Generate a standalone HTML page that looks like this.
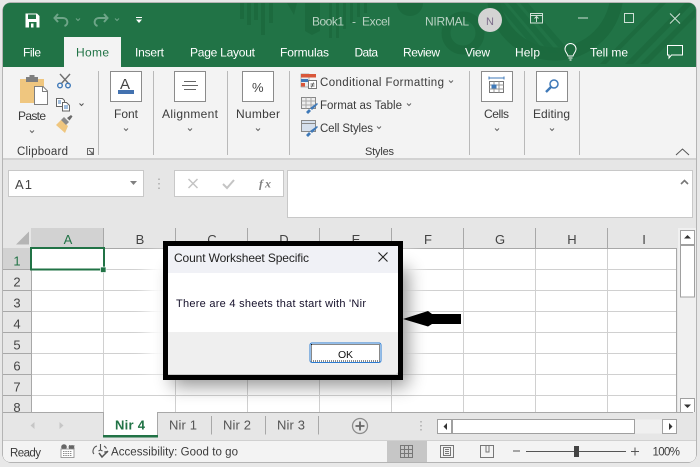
<!DOCTYPE html>
<html><head><meta charset="utf-8"><title>Excel</title>
<style>
html,body{margin:0;padding:0;background:#e8e8e8;width:700px;height:467px;overflow:hidden}
svg{display:block}
text{font-family:"Liberation Sans",sans-serif;font-size:12px;fill:#3b3b3b}
.tb text{fill:#fff}
.hd text{font-size:13px;fill:#444;text-anchor:middle}
.tt text{fill:#b9d2c3}
.nf{fill:none}
</style></head><body>
<svg width="700" height="467" viewBox="0 0 700 467" xmlns="http://www.w3.org/2000/svg" lengthAdjust="spacingAndGlyphs">
<defs>
<clipPath id="w"><rect x="3" y="3" width="693" height="459" rx="7"/></clipPath>
<clipPath id="tc"><rect x="3" y="3" width="693" height="64"/></clipPath>
<clipPath id="gc"><rect x="0" y="228" width="700" height="184.500"/></clipPath>
<clipPath id="sc"><rect x="104" y="248" width="573" height="164"/></clipPath>
<filter id="bl" x="-30%" y="-40%" width="160%" height="180%"><feGaussianBlur stdDeviation="9"/></filter>
<filter id="bw" x="-30%" y="-40%" width="160%" height="180%"><feGaussianBlur stdDeviation="8"/></filter>
</defs>
<rect x="2.500" y="2.500" width="694" height="460" rx="8" fill="#808080"/>
<g clip-path="url(#w)">
<rect x="0" y="0" width="700" height="467" fill="#e6e6e6"/>
<!-- title + tab bar -->
<rect x="0" y="0" width="700" height="67" fill="#217346"/>
<g clip-path="url(#tc)" fill="#1c6a3e" stroke="none">
<rect x="240" y="3" width="4" height="16"/><rect x="247" y="3" width="4" height="22"/><rect x="254" y="3" width="4" height="17"/><rect x="261" y="3" width="4" height="32"/><rect x="269" y="3" width="4" height="20"/>
<path d="M287 3h10l-3 12zM305 3h15v28l-8 4-7-4zM329 3h3v35h-3zM336 3h3v35h-3zM343 3h3v26h-3zM350 3h3v20h-3zM357 3h3v14h-3zM364 3h3v10h-3z"/>
<circle cx="410" cy="3" r="13"/>
<circle cx="463" cy="33" r="17" fill="none" stroke="#1c6a3e" stroke-width="9"/>
<circle cx="555" cy="-8" r="62" fill="none" stroke="#1c6a3e" stroke-width="13"/>
<path d="M496 3l8 0 42 50-8 0zM508 3l8 0 42 50-8 0zM520 3l8 0 38 44-8 0z" opacity=".8"/>
<path d="M625 64l60-61h8l-60 61zM640 64l55-55v8l-47 47zM600 64l60-61h6l-60 61z" opacity=".85"/>
</g>
<!-- QAT -->
<path d="M25.500 13.500h11.500l2.500 2.500v11.500h-14z" fill="#fff"/>
<rect x="28" y="14.500" width="8" height="4.500" fill="#217346"/>
<rect x="29" y="22" width="7.500" height="5.500" fill="#217346"/>
<rect x="31" y="23.500" width="2.500" height="4" fill="#fff"/>
<g fill="none" stroke="#6ea588" stroke-width="2">
<path d="M58 14l-3.500 4 3.500 4M55 18h8c5 0 6 6.500 1.500 8"/>
<path d="M104 14l3.500 4-3.500 4M107 18h-8c-5 0-6 6.500-1.500 8"/>
</g>
<g fill="none" stroke="#6ea588"><path d="M76 18.500l2 2 2-2M115 18.500l2 2 2-2"/></g>
<path d="M136 17.500h6" stroke="#fff"/><path d="M136 19.500h6l-3 3.500z" fill="#fff"/>
<g class="tt">
<text x="312" y="25.500" textLength="32">Book1</text><text x="352" y="25.500">-</text><text x="362" y="25.500" textLength="28">Excel</text>
<text x="425" y="25.500" textLength="44">NIRMAL</text>
</g>
<circle cx="490" cy="20" r="12" fill="#d3d3d3"/>
<text x="486" y="25" textLength="8.500" style="font-size:11px;fill:#7d6d8a">N</text>
<g fill="none" stroke="#cfe0d6">
<rect x="530.500" y="13.500" width="12" height="9.500"/><path d="M530.500 15.500h12M536.500 22v-5M534.500 18.500l2-2 2 2"/>
<path d="M578 18h10"/><rect x="624.500" y="13.500" width="9" height="9"/><path d="M670 13.500l10 10M680 13.500l-10 10"/>
</g>
<!-- tabs -->
<rect x="64" y="37" width="57" height="30" fill="#f3f3f3"/>
<g class="tb">
<text x="23" y="56.500" textLength="18">File</text>
<text x="76" y="56.500" textLength="33" style="fill:#217346">Home</text>
<text x="135" y="56.500" textLength="29">Insert</text>
<text x="190" y="56.500" textLength="65">Page Layout</text>
<text x="280" y="56.500" textLength="49">Formulas</text>
<text x="354.500" y="56.500" textLength="23.500">Data</text>
<text x="403" y="56.500" textLength="37">Review</text>
<text x="465" y="56.500" textLength="25">View</text>
<text x="515" y="56.500" textLength="25">Help</text>
<text x="590" y="56.500" textLength="38">Tell me</text>
</g>
<g fill="none" stroke="#fff">
<path d="M568 56c-.5-2.500-3-4-3-7a5.500 5.500 0 0 1 11 0c0 3-2.500 4.500-3 7z"/><path d="M568.500 58h4M569.500 60h2"/>
<path d="M667.500 45.500h15v9.500h-11l-2.500 3v-3h-1.500z"/>
</g>
<!-- ribbon -->
<rect x="0" y="67" width="700" height="91" fill="#f3f3f3"/>
<rect x="0" y="158" width="700" height="2" fill="#d2d2d2"/>
<g stroke="#b9b9b9" fill="none">
<path d="M98.500 71v84M153.500 71v84M227.500 71v84M289.500 71v84M469.500 71v84M524.500 71v84M579.500 71v84"/>
</g>
<!-- Paste icon -->
<path d="M20 79h24v14H34v10H20z" fill="#efc67f"/>
<rect x="26" y="77" width="12" height="5" fill="#7f7f7f"/><rect x="29.500" y="75" width="5" height="3" fill="#7f7f7f"/>
<path d="M34.500 86.500h8.500l4.500 4.500v13.500h-13z" fill="#fff" stroke="#7f7f7f"/>
<path d="M42.500 87v4.500h5" fill="none" stroke="#7f7f7f"/>
<!-- scissors -->
<g fill="none" stroke-width="1.400">
<path d="M60 74l9 10M70 74l-9 10" stroke="#707070"/>
<circle cx="60" cy="85.500" r="2.300" stroke="#3f79b8"/><circle cx="68" cy="85.500" r="2.300" stroke="#3f79b8"/>
</g>
<!-- copy -->
<path d="M56.500 98.500h6l2 2v6h-8z" fill="#fff" stroke="#666"/>
<path d="M62.500 102.500h4l3 3v5.500h-7z" fill="#fff" stroke="#666"/>
<path d="M58 101h3M58 103h3M64 106h4M64 108h4" stroke="#3f79b8"/>
<path d="M79.500 103.500l2 2 2-2" fill="none" stroke="#555"/>
<!-- format painter -->
<path d="M56 125l5-5 7 6-3 7z" fill="#efc67f"/>
<path d="M61 120l3-3 5 5-3 3z" fill="#8a8a8a"/><path d="M67 118l4-3 1.500 1.500-3 4z" fill="#6a6a6a"/>
<!-- boxes -->
<g fill="#fff" stroke="#8b8b8b">
<rect x="110.500" y="71.500" width="31" height="30"/>
<rect x="174.500" y="71.500" width="31" height="30"/>
<rect x="242.500" y="71.500" width="31" height="30"/>
<rect x="481.500" y="71.500" width="31" height="30"/>
<rect x="536.500" y="71.500" width="31" height="30"/>
</g>
<text x="120" y="89" textLength="12" style="font-size:15px;fill:#444">A</text>
<rect x="118" y="90" width="16" height="4" fill="#4372b0"/>
<path d="M184 81.500h12M182 85.500h16M184 89.500h12" stroke="#666" fill="none"/>
<text x="252" y="92" textLength="13" style="font-size:13px;fill:#444">%</text>
<!-- cells icon -->
<path d="M489 78h15M489 76.500v3M504 76.500v3" stroke="#3f79b8" fill="none"/>
<rect x="489.500" y="81.500" width="14" height="11" fill="#fff" stroke="#777"/>
<path d="M489.500 85h14M489.500 89h14M494 81.500v11M499 81.500v11" stroke="#999"/>
<rect x="491.500" y="84.500" width="5" height="4" fill="#3f79b8"/>
<!-- editing -->
<circle cx="554" cy="84" r="4" fill="#fff" stroke="#3f79b8" stroke-width="1.500"/>
<path d="M551 87l-5 5" stroke="#3f79b8" stroke-width="2.400"/>
<!-- cond fmt icons -->
<rect x="301" y="74" width="8" height="13" fill="#ececec" stroke="#8b8b8b" stroke-width=".6"/>
<rect x="301" y="74" width="15" height="3.500" fill="#d9573a"/><rect x="301" y="79" width="7" height="3" fill="#3f79b8"/><rect x="301" y="83" width="4" height="3.500" fill="#d9573a"/>
<rect x="308.500" y="80.500" width="8" height="8" fill="#fff" stroke="#777"/>
<path d="M310.500 84h4M310.500 86h4M313.500 82.500l-2 5" stroke="#444" stroke-width=".7"/>
<g>
<rect x="301.500" y="97.500" width="14" height="11" fill="#eee" stroke="#888"/>
<path d="M301.500 101h14M301.500 105h14M306 97.500v11M311 97.500v11" stroke="#aaa"/>
<rect x="301.500" y="120.500" width="14" height="11" fill="#d5dfec" stroke="#888"/>
<path d="M301.500 123.500h14" stroke="#888"/>
<path d="M306 112l3-3 2 2-3 3zM310 108l7-5 1 1-6 6z" fill="#3f79b8"/>
<path d="M306 135l3-3 2 2-3 3zM310 131l7-5 1 1-6 6z" fill="#3f79b8"/>
</g>
<!-- ribbon labels -->
<text x="18" y="120" textLength="28">Paste</text>
<text x="114" y="118" textLength="24">Font</text>
<text x="162" y="118" textLength="56">Alignment</text>
<text x="236" y="118" textLength="44">Number</text>
<text x="484" y="118" textLength="25">Cells</text>
<text x="533" y="118" textLength="37">Editing</text>
<text x="17" y="155" textLength="51" style="font-size:11.500px">Clipboard</text>
<text x="365" y="155" textLength="29" style="font-size:11px">Styles</text>
<text x="320" y="86" textLength="124" style="font-size:11.500px">Conditional Formatting</text>
<text x="320" y="109" textLength="82" style="font-size:11.500px">Format as Table</text>
<text x="320" y="132" textLength="53" style="font-size:11.500px">Cell Styles</text>
<g fill="none" stroke="#666">
<path d="M30 130.500l2 2 2-2M124 128.500l2 2 2-2M188 128.500l2 2 2-2M256 128.500l2 2 2-2M495 128.500l2 2 2-2M550 128.500l2 2 2-2"/>
<path d="M449 80.500l2 2 2-2M407 103.500l2 2 2-2M377 126.500l2 2 2-2"/>
<rect x="87.500" y="148.500" width="6" height="6"/><path d="M89 150l4 4M93 151.500v2.500h-2.500"/>
<path d="M676 155l6.500-6 6.500 6" stroke="#555"/>
</g>
<!-- formula bar -->
<rect x="8.500" y="170.500" width="135" height="26" fill="#fff" stroke="#c8c8c8"/>
<text x="15" y="189" textLength="17" style="font-size:13px;fill:#444">A1</text>
<path d="M130 181h7l-3.500 4z" fill="#808080"/>
<path d="M159 178.500v1.500M159 183v1.500M159 187.500v1.500" stroke="#aaa" stroke-width="1.500"/>
<rect x="174.500" y="170.500" width="109" height="26" fill="#fff" stroke="#c8c8c8"/>
<path d="M188.500 179l9 9M197.500 179l-9 9" stroke="#c4c4c4" stroke-width="1.500" fill="none"/>
<path d="M223 184l4 4 7-8" stroke="#c4c4c4" stroke-width="2" fill="none"/>
<text x="259" y="187.500" textLength="12" style="font-size:12px;font-family:'Liberation Serif',serif;font-style:italic;font-weight:bold;fill:#808080">fx</text>
<rect x="287.500" y="170.500" width="405" height="47" fill="#fff" stroke="#c8c8c8"/>
<path d="M681 184l3.500-3.500 3.500 3.500" fill="none" stroke="#777" stroke-width="1.600"/>
<!-- grid -->
<rect x="31" y="248" width="646" height="165" fill="#fff"/>
<rect x="31" y="228" width="73" height="20" fill="#d2d2d2"/>
<rect x="3" y="248" width="28" height="22" fill="#d2d2d2"/>
<path d="M16 244.500h13v-13z" fill="#b5b5b5"/>
<g clip-path="url(#gc)">
<g stroke="#d0d0d0" fill="none">
<path d="M31 269.500h646M31 290.500h646M31 311.500h646M31 332.500h646M31 353.500h646M31 374.500h646M31 395.500h646"/>
<path d="M103.500 248v165M175.500 248v165M247.500 248v165M319.500 248v165M391.500 248v165M463.500 248v165M535.500 248v165M607.500 248v165"/>
</g>
<g stroke="#a8a8a8" fill="none">
<path d="M31 248.500h646M31.500 248v165M676.500 248v165"/>
<path d="M103.500 228v20M175.500 228v20M247.500 228v20M319.500 228v20M391.500 228v20M463.500 228v20M535.500 228v20M607.500 228v20"/>
<path d="M3 269.500h28M3 290.500h28M3 311.500h28M3 332.500h28M3 353.500h28M3 374.500h28M3 395.500h28"/>
</g>
<g class="hd">
<text x="68" y="244" style="fill:#217346">A</text><text x="140" y="244">B</text><text x="212" y="244">C</text><text x="284" y="244">D</text><text x="356" y="244">E</text><text x="428" y="244">F</text><text x="500" y="244">G</text><text x="572" y="244">H</text><text x="644" y="244">I</text>
<text x="17" y="265.500" style="fill:#217346">1</text><text x="17" y="286.500">2</text><text x="17" y="307.500">3</text><text x="17" y="328.500">4</text><text x="17" y="349.500">5</text><text x="17" y="370.500">6</text><text x="17" y="391.500">7</text><text x="17" y="412">8</text>
</g>
</g>
<rect x="31" y="248" width="73" height="21.500" fill="none" stroke="#217346" stroke-width="2"/>
<rect x="100.500" y="267" width="5.500" height="5.500" fill="#217346" stroke="#fff" stroke-width=".7"/>
<!-- shadow: white glow erases gridlines at the sides, grey falls below and right -->
<g clip-path="url(#sc)">
<rect x="148" y="252" width="268" height="122" fill="#fff" filter="url(#bw)"/>
<rect x="172" y="268" width="236" height="118" fill="#000" opacity=".42" filter="url(#bl)"/>
</g>
<!-- v scroll -->
<rect x="678" y="228" width="18" height="185" fill="#f0f0f0"/>
<g fill="#fff" stroke="#a0a0a0">
<rect x="680.500" y="230.500" width="14" height="14"/>
<rect x="680.500" y="245.500" width="14" height="51.500"/>
<rect x="680.500" y="398.500" width="14" height="14"/>
</g>
<path d="M684 238.500h7l-3.500-3.500zM684 404.500h7l-3.500 3.500z" fill="#333"/>
<!-- tab row -->
<rect x="3" y="412" width="693" height="28" fill="#e6e6e6"/>
<path d="M3 412.500h690" stroke="#a8a8a8"/>
<path d="M34.500 422v7l-4-3.500zM59.500 422v7l4-3.500z" fill="#c6c6c6"/>
<rect x="103" y="412" width="55" height="24" fill="#fff"/>
<path d="M103.500 412v24M157.500 412v24" stroke="#a8a8a8"/>
<rect x="103" y="435" width="55" height="2.500" fill="#217346"/>
<text x="115" y="429.500" textLength="30" style="font-size:13px;font-weight:bold;fill:#217346">Nir 4</text>
<text x="169" y="429.500" textLength="28" style="font-size:13px;fill:#555">Nir 1</text>
<text x="223" y="429.500" textLength="28" style="font-size:13px;fill:#555">Nir 2</text>
<text x="277" y="429.500" textLength="28" style="font-size:13px;fill:#555">Nir 3</text>
<path d="M211.500 416v18.500M265.500 416v18.500M318.500 416v18.500" stroke="#a8a8a8"/>
<circle cx="360" cy="426" r="7.500" fill="none" stroke="#8c8c8c" stroke-width="1.300"/>
<path d="M355.500 426h9M360 421.500v9" stroke="#666" stroke-width="1.800"/>
<path d="M421 421v1.500M421 425v1.500M421 429v1.500" stroke="#bbb" stroke-width="2"/>
<rect x="437.500" y="419.500" width="239" height="14" fill="#f0f0f0" stroke="none"/>
<g fill="#fff" stroke="#a0a0a0">
<rect x="437.500" y="419.500" width="14" height="14"/>
<rect x="452.500" y="419.500" width="182" height="14"/>
<rect x="662.500" y="419.500" width="14" height="14"/>
</g>
<path d="M447 423v7l-3.500-3.500zM669 423v7l3.500-3.500z" fill="#333"/>
<!-- status -->
<rect x="3" y="440" width="693" height="22" fill="#f3f3f3"/>
<path d="M3 440.500h693" stroke="#d0d0d0"/>
<text x="10" y="456.500" textLength="31" style="font-size:11.500px">Ready</text>
<circle cx="64" cy="447" r="2.800" fill="#666"/>
<rect x="61" y="449" width="13" height="8.500" fill="#fff" stroke="#888" stroke-width=".8"/>
<path d="M69 445.500h5v3h-5zM63 451.500h9M63 453.500h9M63 455.500h9" fill="#666" stroke="#666" stroke-width=".8" stroke-dasharray="1.500 .8"/>
<g fill="none" stroke="#555" stroke-width="1.100">
<path d="M97 446c-4 1-5 6-3 8M104 446c1 .5 2 1.500 2.500 2.500"/>
<path d="M100.500 444v6M98.500 451l2-1 2 1M106 451v2M104 452h4" />
<path d="M99 453l3 4 6-6" stroke-width="1.500"/>
</g>
<text x="111" y="455.500" textLength="127" style="font-size:11.500px">Accessibility: Good to go</text>
<rect x="387" y="441" width="40" height="21" fill="#c6c6c6"/>
<g fill="none" stroke="#777">
<rect x="400.500" y="445.500" width="12" height="12"/><path d="M404.500 445.500v12M408.500 445.500v12M400.500 449.500h12M400.500 453.500h12"/>
<rect x="440.500" y="445.500" width="13" height="12"/><rect x="443.500" y="447.500" width="7" height="8"/><path d="M445 449.500h4M445 451.500h4M445 453.500h4"/>
<rect x="480.500" y="445.500" width="13" height="12"/><path d="M486 445.500v6.500h3v-6.500"/>
</g>
<path d="M513 451h7M526 451.500h100M631 451.500h8M635 447.500v8" stroke="#555" fill="none"/>
<rect x="574" y="446" width="5" height="11" fill="#444"/>
<text x="652.500" y="455.500" textLength="27.500" style="font-size:11.500px">100%</text>
<!-- dialog -->
<rect x="163" y="241" width="240" height="139" fill="#000"/>
<rect x="168" y="246" width="230" height="129" fill="#c9c9c9"/>
<path d="M168 246h230v125a3 3 0 0 1-3 3H168z" fill="#fff"/>
<rect x="168" y="246" width="230" height="27" fill="#f0f1f6"/>
<path d="M168 332h230v39a3 3 0 0 1-3 3H168z" fill="#efefef"/>
<text x="174" y="262" textLength="135" style="font-size:12px;fill:#222">Count Worksheet Specific</text>
<path d="M378.500 252.500l9 9M387.500 252.500l-9 9" stroke="#222" fill="none" stroke-width="1.100"/>
<text x="176" y="307" textLength="190" style="font-size:11px;fill:#15102a">There are 4 sheets that start with 'Nir</text>
<rect x="310" y="343" width="71" height="19.500" rx="2" fill="#fff" stroke="#2b7cd3"/>
<rect x="311.500" y="344.500" width="68" height="16.500" fill="none" stroke="#111" stroke-dasharray="1 1"/>
<text x="338" y="358" textLength="15" style="font-size:10.500px;fill:#111">OK</text>
<!-- arrow -->
<path d="M403 319l25-8 4 3h29v10h-29l-4 2.500z" fill="#000"/>
</g>
</svg>
</body></html>
